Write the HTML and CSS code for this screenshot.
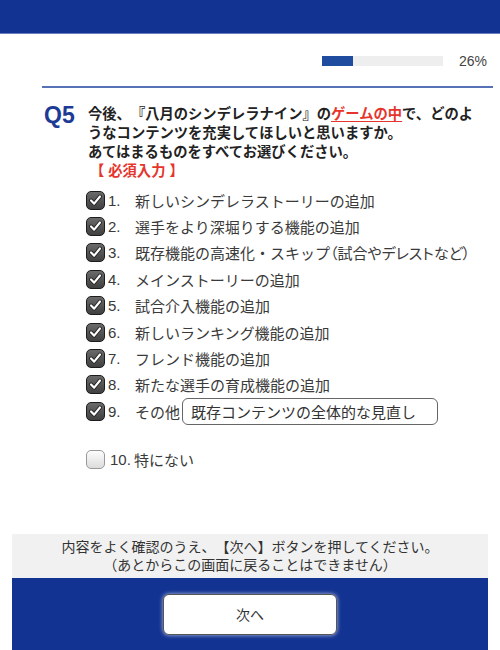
FILE: index.html
```html
<!DOCTYPE html>
<html lang="ja">
<head>
    <meta charset="UTF-8">
    <meta name="viewport" content="width=device-width, initial-scale=1.0">
    <title>アンケート</title>
    <link rel="stylesheet" href="styles.css">
</head>
<body>
    <div class="header"></div>

    <div class="progress-row">
        <div class="progress"><div class="progress-fill" style="width: 26%"></div></div>
        <span class="progress-text">26%</span>
    </div>

    <div class="question">
        <div class="qno">Q5</div>
        <div class="qtext">
            今後、『八月のシンデレラナイン』の<span class="hl">ゲームの中</span>で、どのようなコンテンツを充実してほしいと思いますか。<br>
            あてはまるものをすべてお選びください。<br>
            <span class="required">【 必須入力 】</span>
        </div>
    </div>

    <ul class="options">
        <li><span class="box checked"><svg viewBox="0 0 19 19"><path class="ck-bg" d="M4.5 9.5 L8 13 L14.5 5"/><path class="ck" d="M4.5 9.5 L8 13 L14.5 5"/></svg></span><span class="num">1.</span>新しいシンデレラストーリーの追加</li>
        <li><span class="box checked"><svg viewBox="0 0 19 19"><path class="ck-bg" d="M4.5 9.5 L8 13 L14.5 5"/><path class="ck" d="M4.5 9.5 L8 13 L14.5 5"/></svg></span><span class="num">2.</span>選手をより深堀りする機能の追加</li>
        <li><span class="box checked"><svg viewBox="0 0 19 19"><path class="ck-bg" d="M4.5 9.5 L8 13 L14.5 5"/><path class="ck" d="M4.5 9.5 L8 13 L14.5 5"/></svg></span><span class="num">3.</span>既存機能の高速化・スキップ<span class="note">（試合やデレストなど）</span></li>
        <li><span class="box checked"><svg viewBox="0 0 19 19"><path class="ck-bg" d="M4.5 9.5 L8 13 L14.5 5"/><path class="ck" d="M4.5 9.5 L8 13 L14.5 5"/></svg></span><span class="num">4.</span>メインストーリーの追加</li>
        <li><span class="box checked"><svg viewBox="0 0 19 19"><path class="ck-bg" d="M4.5 9.5 L8 13 L14.5 5"/><path class="ck" d="M4.5 9.5 L8 13 L14.5 5"/></svg></span><span class="num">5.</span>試合介入機能の追加</li>
        <li><span class="box checked"><svg viewBox="0 0 19 19"><path class="ck-bg" d="M4.5 9.5 L8 13 L14.5 5"/><path class="ck" d="M4.5 9.5 L8 13 L14.5 5"/></svg></span><span class="num">6.</span>新しいランキング機能の追加</li>
        <li><span class="box checked"><svg viewBox="0 0 19 19"><path class="ck-bg" d="M4.5 9.5 L8 13 L14.5 5"/><path class="ck" d="M4.5 9.5 L8 13 L14.5 5"/></svg></span><span class="num">7.</span>フレンド機能の追加</li>
        <li><span class="box checked"><svg viewBox="0 0 19 19"><path class="ck-bg" d="M4.5 9.5 L8 13 L14.5 5"/><path class="ck" d="M4.5 9.5 L8 13 L14.5 5"/></svg></span><span class="num">8.</span>新たな選手の育成機能の追加</li>
        <li><span class="box checked"><svg viewBox="0 0 19 19"><path class="ck-bg" d="M4.5 9.5 L8 13 L14.5 5"/><path class="ck" d="M4.5 9.5 L8 13 L14.5 5"/></svg></span><span class="num">9.</span>その他<input type="text" class="other" value="既存コンテンツの全体的な見直し"></li>
        <li class="last"><span class="box"></span><span class="num ten">10.</span>特にない</li>
    </ul>

    <div class="notice">
        内容をよく確認のうえ、【次へ】ボタンを押してください。<br>
        （あとからこの画面に戻ることはできません）
    </div>
    <div class="footer">
        <button class="next-btn">次へ</button>
    </div>
</body>
</html>
```

FILE: styles.css
```css
body {
    margin: 0;
    font-family: "Liberation Sans", "Noto Sans CJK JP", sans-serif;
    color: #333;
    background-color: #fff;
    text-spacing-trim: space-all;
}
.header {
    height: 33px;
    background-color: #133393;
    border-bottom: 1px solid #6b7fc2;
}
.progress-row {
    display: flex;
    align-items: center;
    justify-content: flex-end;
    height: 52px;
    margin-left: 42px;
    margin-right: 7px;
    padding-right: 6px;
    border-bottom: 2px solid #5671b6;
}
.progress {
    width: 121px;
    height: 10px;
    background-color: #eee;
    margin-right: 16px;
    margin-top: 2px;
}
.progress-fill {
    height: 100%;
    background-color: #1f4c9f;
}
.progress-text {
    font-size: 14px;
    color: #444;
    margin-top: 2px;
}
.question {
    display: flex;
    margin: 14px 0 0 44px;
}
.qno {
    width: 44px;
    font-size: 23px;
    font-weight: bold;
    color: #1d3b95;
    line-height: 26px;
}
.qtext {
    width: 396px;
    padding-top: 3px;
    font-size: 14.3px;
    line-height: 19px;
    font-weight: bold;
    color: #222;
}
.hl {
    color: #e5352c;
    text-decoration: underline;
    text-underline-offset: 2px;
}
.required {
    color: #e5352c;
    padding-left: 2px;
}
.options {
    list-style: none;
    margin: 6px 0 0 86px;
    padding: 0;
}
.options li {
    display: flex;
    align-items: center;
    height: 26.4px;
    font-size: 15px;
    color: #3a3a3a;
}
.options li.last {
    margin-top: 22px;
}
.note {
    font-feature-settings: "palt";
}
.box {
    width: 19px;
    height: 19px;
    box-sizing: border-box;
    border-radius: 5px;
    border: 1px solid #999;
    background: linear-gradient(#fdfdfd, #dcdcdc);
    flex-shrink: 0;
}
.box.checked {
    border-color: #1c1c1c;
    background: linear-gradient(#6a6a6a, #404040);
}
.box svg {
    display: block;
    width: 17px;
    height: 17px;
}
.ck-bg {
    fill: none;
    stroke: #222;
    stroke-width: 4.4;
    stroke-linecap: round;
    stroke-linejoin: round;
}
.ck {
    fill: none;
    stroke: #fff;
    stroke-width: 2.4;
    stroke-linecap: round;
    stroke-linejoin: round;
}
.num {
    width: 27px;
    margin-left: 3px;
    font-size: 15px;
}
.num.ten {
    margin-left: 5px;
    width: 24px;
}
.other {
    width: 256px;
    height: 27px;
    box-sizing: border-box;
    margin-left: 2px;
    padding: 0 8px;
    border: 1px solid #666;
    border-radius: 6px;
    font-family: "Liberation Sans", "Noto Sans CJK JP", sans-serif;
    font-size: 15px;
    color: #333;
}
.notice {
    margin: 61px 12px 0;
    padding: 4px 0;
    background-color: #f1f1f1;
    text-align: center;
    font-size: 14px;
    line-height: 18px;
    color: #333;
}
.footer {
    margin: 0 12px;
    height: 80px;
    background-color: #133393;
    display: flex;
    justify-content: center;
    padding-top: 16px;
    box-sizing: border-box;
}
.next-btn {
    width: 174px;
    height: 41px;
    background-color: #fff;
    border: 1px solid #555;
    border-radius: 6px;
    box-shadow: 0 0 4px rgba(255, 255, 255, 0.7);
    font-family: "Liberation Sans", "Noto Sans CJK JP", sans-serif;
    font-size: 14px;
    color: #333;
}
```
